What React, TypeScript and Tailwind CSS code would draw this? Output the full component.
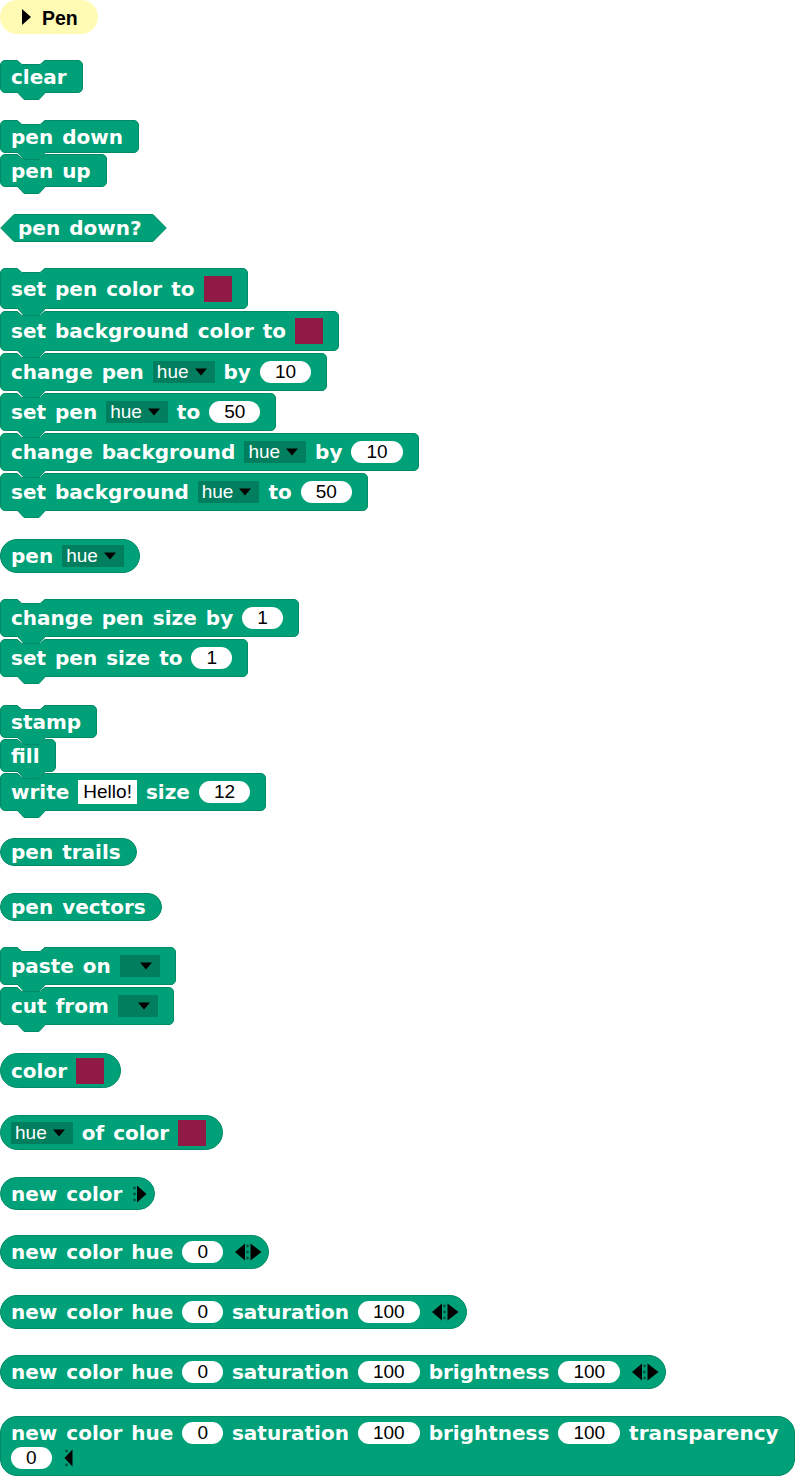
import React from "react";

const W =
  "relative font-['DejaVu_Sans',Verdana,sans-serif] font-bold text-[20px] leading-[22px] text-white whitespace-nowrap";
const R = "font-['Liberation_Sans',Arial,sans-serif] text-[19px] leading-[22px] whitespace-nowrap";

const FILL = "#00a178";
const EDGE = "#008a66";

function Words({ t }: { t: string }) {
  return (
    <>
      {t.split(" ").map((w, i) => (
        <span key={i} className={W}>
          {w}
        </span>
      ))}
    </>
  );
}

function Notch() {
  return (
    <svg className="absolute left-[-1px] top-[-1px]" width="48" height="6" viewBox="0 0 48 6">
      <path d="M17 0 L22 5 L40 5 L45 0 Z" fill="#ffffff" />
      <path d="M17 0.5 L22 4.5 L40 4.5 L45 0.5" fill="none" stroke={EDGE} strokeWidth="1" />
    </svg>
  );
}

function Tab() {
  return (
    <svg className="absolute left-[-1px] top-full z-10" width="48" height="9" viewBox="0 0 48 9">
      <path d="M17 0 L24 7.5 L39 7.5 L46 0 Z" fill={FILL} />
      <path d="M17.5 0.5 L24 7.5 L39 7.5 L45.5 0.5" fill="none" stroke={EDGE} strokeWidth="1" />
    </svg>
  );
}

function Cmd({ cls, children }: { cls: string; children: React.ReactNode }) {
  return (
    <div
      className={`relative flex items-center gap-[9px] pl-[10px] pr-[15px] rounded-[5px] bg-[#00a178] border border-[#008a66] ${cls}`}
    >
      <Notch />
      {children}
      <Tab />
    </div>
  );
}

function Rep({ cls, children }: { cls: string; children: React.ReactNode }) {
  return (
    <div
      className={`relative flex items-center gap-[9px] pl-[10px] rounded-full bg-[#00a178] border border-[#008a66] ${cls}`}
    >
      {children}
    </div>
  );
}

function Pill({ v }: { v: string }) {
  return (
    <div className={`relative h-[22px] px-[15px] rounded-full bg-white text-black flex items-center ${R}`}>
      {v}
    </div>
  );
}

function Swatch() {
  return <div className="relative w-[28px] h-[26px] bg-[#911a44] shrink-0" />;
}

function Arrow() {
  return (
    <svg width="12" height="8" viewBox="0 0 12 8" className="shrink-0">
      <path d="M0 0.5 L12 0.5 L6 7.5 Z" fill="#000" />
    </svg>
  );
}

function DD({ label }: { label?: string }) {
  if (!label) {
    return (
      <div className="relative flex items-center h-[22px] bg-[#007e5e] pl-[20px] pr-[8px]">
        <Arrow />
      </div>
    );
  }
  return (
    <div className="relative flex items-center h-[22px] bg-[#007e5e] pl-[4px] pr-[8px] gap-[6px]">
      <span className={`text-white ${R}`}>{label}</span>
      <Arrow />
    </div>
  );
}

function ArrowsRight() {
  return (
    <svg width="14" height="18" viewBox="0 0 14 18" className="ml-[2px] shrink-0">
      <circle cx="1.5" cy="3" r="1.4" fill="#00553f" />
      <circle cx="1.5" cy="9" r="1.4" fill="#00553f" />
      <circle cx="1.5" cy="15" r="1.4" fill="#00553f" />
      <path d="M4 0.5 L13.5 9 L4 17.5 Z" fill="#000" />
    </svg>
  );
}

function ArrowsBoth() {
  return (
    <svg width="27" height="18" viewBox="0 0 27 18" className="ml-[3px] shrink-0">
      <path d="M0 9 L10 0.5 L10 17.5 Z" fill="#000" />
      <circle cx="12.5" cy="3" r="1.4" fill="#00553f" />
      <circle cx="12.5" cy="9" r="1.4" fill="#00553f" />
      <circle cx="12.5" cy="15" r="1.4" fill="#00553f" />
      <path d="M15.5 0.5 L26.5 9 L15.5 17.5 Z" fill="#000" />
    </svg>
  );
}

function ArrowsLeft() {
  return (
    <svg width="10" height="18" viewBox="0 0 10 18" className="ml-[3px] shrink-0">
      <circle cx="2.5" cy="2" r="1.4" fill="#00553f" />
      <circle cx="2.5" cy="9" r="1.4" fill="#00553f" />
      <circle cx="2.5" cy="16" r="1.4" fill="#00553f" />
      <path d="M0.5 9 L8.5 0.5 L8.5 17.5 Z" fill="#000" />
    </svg>
  );
}

export default function App() {
  return (
    <div className="w-[800px] min-h-[1482px] bg-white flex flex-col items-start">
      {/* Header */}
      <div className="flex items-center h-[34px] w-[98px] rounded-full bg-[#fffab4] pl-[22px]">
        <svg width="9" height="16" viewBox="0 0 9 16">
          <path d="M0 0 L9 8 L0 16 Z" fill="#000" />
        </svg>
        <span className="ml-[11px] mt-[2px] font-['Liberation_Sans',Arial,sans-serif] font-bold text-[19.5px] leading-[22px] text-black">
          Pen
        </span>
      </div>

      <Cmd cls="h-[33px] mt-[26px]">
        <Words t="clear" />
      </Cmd>

      <Cmd cls="h-[33px] mt-[27px]">
        <Words t="pen down" />
      </Cmd>
      <Cmd cls="h-[33px] mt-[1px]">
        <Words t="pen up" />
      </Cmd>

      {/* predicate */}
      <div className="relative mt-[27px] h-[28px] w-[167px] flex items-center pl-[18px] gap-[9px]">
        <svg className="absolute left-0 top-0" width="167" height="28" viewBox="0 0 167 28">
          <path
            d="M0.7 14 L14 0.5 L153 0.5 L166.3 14 L153 27.5 L14 27.5 Z"
            fill={FILL}
            stroke={EDGE}
            strokeWidth="1"
          />
        </svg>
        <Words t="pen down?" />
      </div>

      <Cmd cls="h-[41px] mt-[26px]">
        <Words t="set pen color to" />
        <Swatch />
      </Cmd>
      <Cmd cls="h-[40px] mt-[2px]">
        <Words t="set background color to" />
        <Swatch />
      </Cmd>
      <Cmd cls="h-[38px] mt-[2px]">
        <Words t="change pen" />
        <DD label="hue" />
        <Words t="by" />
        <Pill v="10" />
      </Cmd>
      <Cmd cls="h-[38px] mt-[2px]">
        <Words t="set pen" />
        <DD label="hue" />
        <Words t="to" />
        <Pill v="50" />
      </Cmd>
      <Cmd cls="h-[38px] mt-[2px]">
        <Words t="change background" />
        <DD label="hue" />
        <Words t="by" />
        <Pill v="10" />
      </Cmd>
      <Cmd cls="h-[38px] mt-[2px]">
        <Words t="set background" />
        <DD label="hue" />
        <Words t="to" />
        <Pill v="50" />
      </Cmd>

      <Rep cls="h-[34px] mt-[28px] pr-[15px]">
        <Words t="pen" />
        <DD label="hue" />
      </Rep>

      <Cmd cls="h-[38px] mt-[26px]">
        <Words t="change pen size by" />
        <Pill v="1" />
      </Cmd>
      <Cmd cls="h-[38px] mt-[2px]">
        <Words t="set pen size to" />
        <Pill v="1" />
      </Cmd>

      <Cmd cls="h-[33px] mt-[28px]">
        <Words t="stamp" />
      </Cmd>
      <Cmd cls="h-[33px] mt-[1px]">
        <Words t="fill" />
      </Cmd>
      <Cmd cls="h-[38px] mt-[1px]">
        <Words t="write" />
        <div className={`relative h-[24px] px-[5px] bg-white text-black flex items-center ${R}`}>Hello!</div>
        <Words t="size" />
        <Pill v="12" />
      </Cmd>

      <Rep cls="h-[28px] mt-[27px] pr-[15px]">
        <Words t="pen trails" />
      </Rep>

      <Rep cls="h-[28px] mt-[27px] pr-[15px]">
        <Words t="pen vectors" />
      </Rep>

      <Cmd cls="h-[38px] mt-[26px]">
        <Words t="paste on" />
        <DD />
      </Cmd>
      <Cmd cls="h-[38px] mt-[2px]">
        <Words t="cut from" />
        <DD />
      </Cmd>

      <Rep cls="h-[35px] mt-[28px] pr-[16px]">
        <Words t="color" />
        <Swatch />
      </Rep>

      <Rep cls="h-[35px] mt-[27px] pr-[16px]">
        <DD label="hue" />
        <Words t="of color" />
        <Swatch />
      </Rep>

      <Rep cls="h-[33px] mt-[27px] pr-[7px]">
        <Words t="new color" />
        <ArrowsRight />
      </Rep>

      <Rep cls="h-[34px] mt-[25px] pr-[6px]">
        <Words t="new color hue" />
        <Pill v="0" />
        <ArrowsBoth />
      </Rep>

      <Rep cls="h-[34px] mt-[26px] pr-[7px]">
        <Words t="new color hue" />
        <Pill v="0" />
        <Words t="saturation" />
        <Pill v="100" />
        <ArrowsBoth />
      </Rep>

      <Rep cls="h-[34px] mt-[26px] pr-[6px]">
        <Words t="new color hue" />
        <Pill v="0" />
        <Words t="saturation" />
        <Pill v="100" />
        <Words t="brightness" />
        <Pill v="100" />
        <ArrowsBoth />
      </Rep>

      <div className="relative mt-[27px] h-[60px] flex flex-col pl-[10px] pr-[15px] pt-[5px] pb-[8px] gap-[3px] rounded-[17px] bg-[#00a178] border border-[#008a66]">
        <div className="flex items-center h-[22px] gap-[9px]">
          <Words t="new color hue" />
          <Pill v="0" />
          <Words t="saturation" />
          <Pill v="100" />
          <Words t="brightness" />
          <Pill v="100" />
          <Words t="transparency" />
        </div>
        <div className="flex items-center h-[22px] gap-[9px]">
          <Pill v="0" />
          <ArrowsLeft />
        </div>
      </div>
    </div>
  );
}
